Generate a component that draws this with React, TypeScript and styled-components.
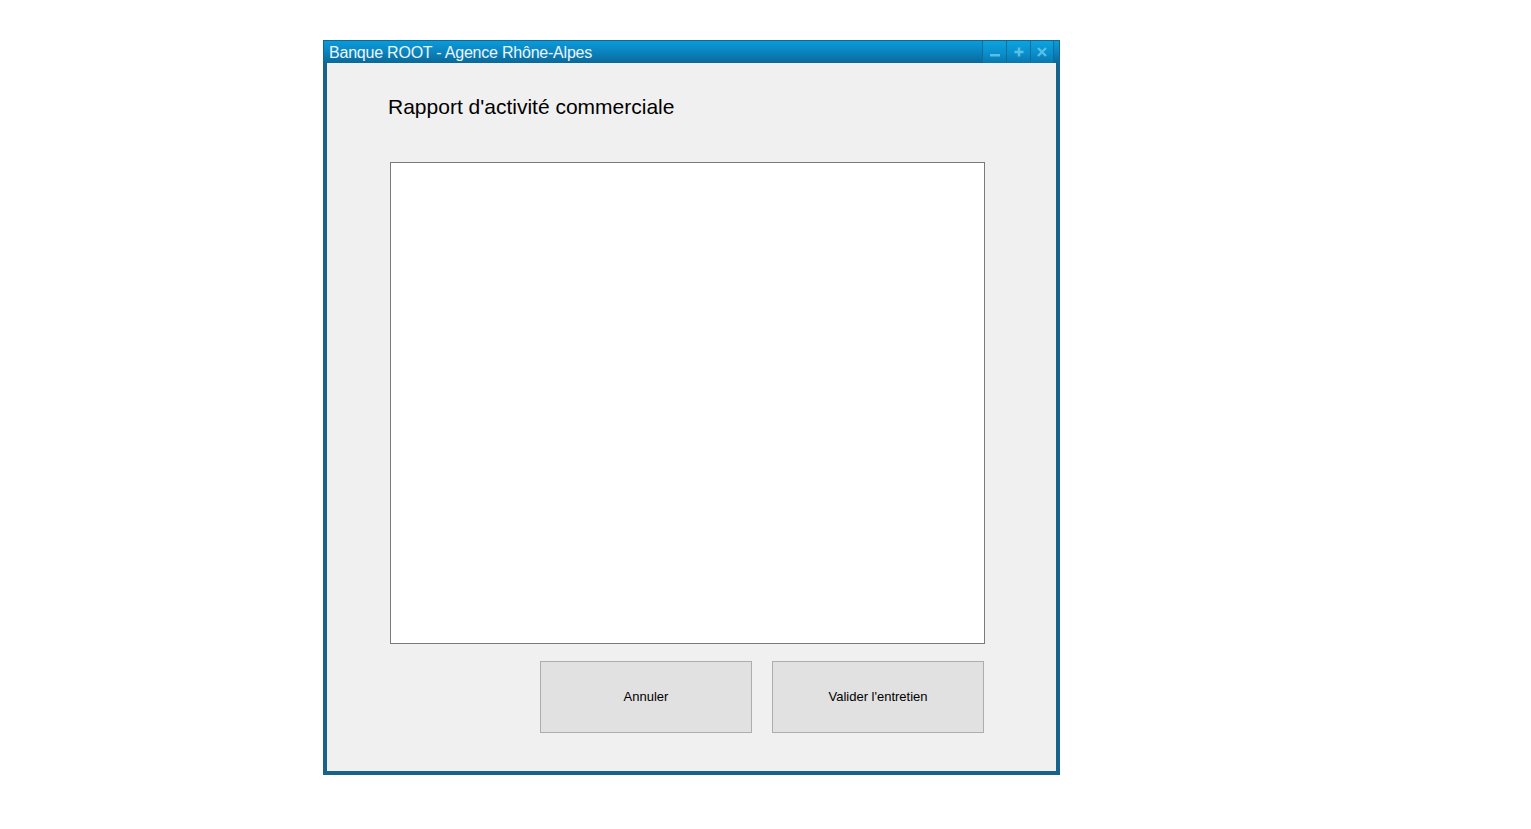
import React from "react";
import styled, { createGlobalStyle } from "styled-components";

const GlobalStyle = createGlobalStyle`
  html, body { margin: 0; padding: 0; background: #ffffff; }
  body { font-family: "Liberation Sans", Arial, sans-serif; }
`;

const Page = styled.div`
  padding: 40px 0 0 323px;
`;

const Window = styled.div`
  width: 737px;
  height: 735px;
  box-sizing: border-box;
  display: flex;
  flex-direction: column;
  background: #17638b;
`;

const TitleBar = styled.div`
  height: 23px;
  box-sizing: border-box;
  display: flex;
  align-items: stretch;
  border: 1px solid #136890;
  border-bottom: none;
  background: linear-gradient(to bottom, #0b9ad9 0%, #0a86c2 45%, #0b6898 100%);
`;

const TitleText = styled.div`
  flex: 1;
  padding: 1px 0 0 5px;
  font-size: 16px;
  letter-spacing: -0.22px;
  line-height: 22px;
  color: #eaf6fc;
  white-space: nowrap;
`;

const Controls = styled.div`
  display: flex;
  padding-right: 5px;
`;

const ControlButton = styled.div`
  width: 24px;
  height: 22px;
  box-sizing: border-box;
  border-left: 1px solid #0a6e9f;
  display: flex;
  align-items: center;
  justify-content: center;
  background: linear-gradient(to bottom, #0ba3e0 0%, #0a8fcb 55%, #0a77ad 100%);
  &:last-child { border-right: 1px solid #0a6e9f; }
`;

const Body = styled.div`
  flex: 1;
  margin: 0 4px 4px 4px;
  background: #f0f0f0;
  display: flex;
  flex-direction: column;
  padding: 32px 0 0 61px;
`;

const Heading = styled.h1`
  margin: 0;
  font-weight: normal;
  font-size: 21px;
  line-height: 24px;
  color: #000000;
`;

const Report = styled.textarea`
  margin: 43px 0 0 2px;
  width: 595px;
  height: 482px;
  box-sizing: border-box;
  border: 1px solid #7a7a7a;
  background: #ffffff;
  resize: none;
  outline: none;
  font-family: "Liberation Sans", Arial, sans-serif;
`;

const Actions = styled.div`
  width: 594px;
  margin: 17px 0 0 2px;
  display: flex;
  justify-content: flex-end;
  gap: 20px;
`;

const ActionButton = styled.button`
  width: 212px;
  height: 72px;
  box-sizing: border-box;
  border: 1px solid #adadad;
  background: #e1e1e1;
  font-family: "Liberation Sans", Arial, sans-serif;
  font-size: 13px;
  color: #000000;
  padding: 0 0 2px 0;
`;

const iconColor = "#58bfe6";

export default function App() {
  return (
    <>
      <GlobalStyle />
      <Page>
        <Window>
          <TitleBar>
            <TitleText>Banque ROOT - Agence Rhône-Alpes</TitleText>
            <Controls>
              <ControlButton>
                <svg width="12" height="12" viewBox="0 0 12 12">
                  <rect x="1" y="8" width="10" height="2.5" fill={iconColor} />
                </svg>
              </ControlButton>
              <ControlButton>
                <svg width="12" height="12" viewBox="0 0 12 12">
                  <rect x="1.5" y="4.75" width="9" height="2.5" fill={iconColor} />
                  <rect x="4.75" y="1.5" width="2.5" height="9" fill={iconColor} />
                </svg>
              </ControlButton>
              <ControlButton>
                <svg width="12" height="12" viewBox="0 0 12 12">
                  <path d="M2 2 L10 10 M10 2 L2 10" stroke={iconColor} strokeWidth="2.4" />
                </svg>
              </ControlButton>
            </Controls>
          </TitleBar>
          <Body>
            <Heading>Rapport d'activité commerciale</Heading>
            <Report />
            <Actions>
              <ActionButton>Annuler</ActionButton>
              <ActionButton>Valider l'entretien</ActionButton>
            </Actions>
          </Body>
        </Window>
      </Page>
    </>
  );
}
